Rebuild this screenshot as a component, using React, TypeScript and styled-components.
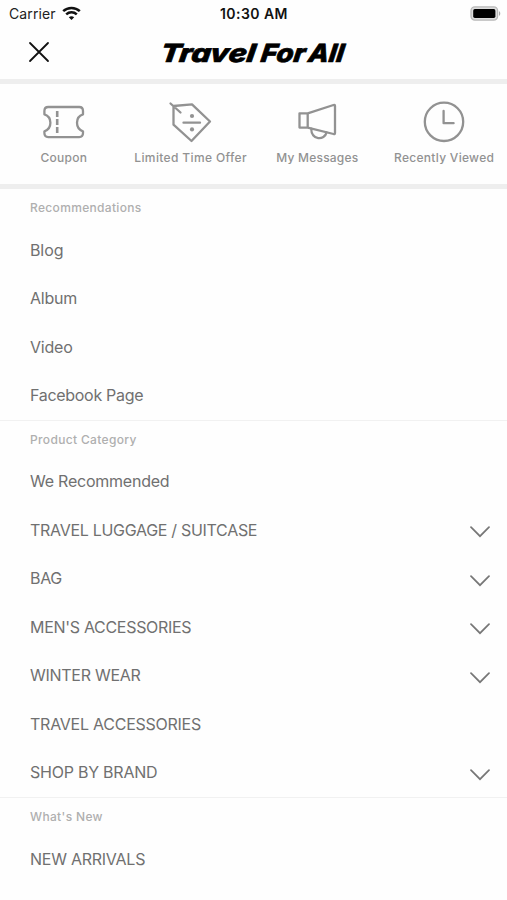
import React from "react";
import styled, { createGlobalStyle } from "styled-components";

const GlobalStyle = createGlobalStyle`
  * { box-sizing: border-box; }
  body {
    margin: 0;
    background: #fefefe;
    font-family: Inter, "Liberation Sans", sans-serif;
    overflow: hidden;
  }
`;

const Screen = styled.div`
  width: 507px;
  height: 900px;
  display: flex;
  flex-direction: column;
  overflow: hidden;
  background: #fefefe;
`;

const StatusBar = styled.div`
  height: 28px;
  flex: none;
  display: grid;
  grid-template-columns: 1fr auto 1fr;
  align-items: center;
  padding: 0 6px 2px 9px;
  font-size: 14px;
  color: #222;
`;

const Carrier = styled.div`
  display: flex;
  align-items: center;
  gap: 6px;
  letter-spacing: 0.12px;
`;

const Clock = styled.div`
  margin-right: 2px;
  font-weight: 600;
  font-size: 14px;
  color: #111;
  letter-spacing: 0.45px;
`;

const BatterySlot = styled.div`
  display: flex;
  justify-content: flex-end;
`;

const Header = styled.header`
  height: 51px;
  flex: none;
  display: grid;
  grid-template-columns: 1fr 190px 1fr;
  align-items: center;
`;

const CloseButton = styled.button`
  display: flex;
  width: 22px;
  height: 22px;
  margin: -3px 0 0 28px;
  padding: 0;
  border: 0;
  background: none;
`;

const Band = styled.div`
  height: 5px;
  flex: none;
  background: #eee;
`;

const QuickLinks = styled.nav`
  height: 100px;
  flex: none;
  display: grid;
  grid-template-columns: repeat(4, 1fr);
  padding-top: 15px;
`;

const QuickLink = styled.a`
  display: flex;
  flex-direction: column;
  align-items: center;
  gap: 6px;
  color: #929292;
`;

const QuickLabel = styled.span<{ $spacing: number }>`
  padding-left: 1px;
  font-size: 12px;
  font-weight: 500;
  line-height: 18px;
  white-space: nowrap;
  letter-spacing: ${(p) => p.$spacing}px;
`;

const Section = styled.section`
  flex: none;
  & + & { border-top: 1px solid #f1f1f1; }
`;

const Heading = styled.h2<{ $spacing: number }>`
  margin: 0;
  height: 36.75px;
  padding-left: 30px;
  font-size: 12px;
  font-weight: 500;
  line-height: 37px;
  color: #afafaf;
  letter-spacing: ${(p) => p.$spacing}px;
`;

const Row = styled.div`
  height: 48.5px;
  display: flex;
  align-items: center;
  justify-content: space-between;
  padding: 0 17px 0.6px 30px;
  color: #707070;
`;

const RowLabel = styled.span<{ $spacing: number }>`
  font-size: 16px;
  line-height: 20px;
  letter-spacing: ${(p) => p.$spacing}px;
`;

const ChevronIcon = styled.svg`
  margin-top: 4.5px;
`;

const Wifi = () => (
  <svg width="19" height="15" viewBox="0 0 19 15" fill="none" stroke="#111" strokeWidth="2.5">
    <path d="M1.2 5.2C5.8.8 13.2.8 17.8 5.2" />
    <path d="M4.2 8.3c3-2.8 7.6-2.8 10.6 0" />
    <path d="M9.5 14 6.8 11.2c1.5-1.3 3.9-1.3 5.4 0z" fill="#111" stroke="none" />
  </svg>
);

const Battery = () => (
  <svg width="31" height="15" viewBox="0 0 31 15">
    <rect x="1" y="0.9" width="26.6" height="13.2" rx="3.8" fill="#ddd" stroke="#b8b8b8" strokeWidth="1.3" />
    <rect x="3.2" y="3.1" width="22.2" height="8.8" rx="1.6" fill="#000" />
    <path d="M29 5.2c1.7.6 1.7 4 0 4.6z" fill="#aaa" />
  </svg>
);

const Close = () => (
  <svg width="22" height="22" viewBox="0 0 22 22" stroke="#111" strokeWidth="1.8" strokeLinecap="round">
    <path d="M2 2l18 18M20 2L2 20" />
  </svg>
);

const Logo = () => (
  <svg width="190" height="42" viewBox="0 0 190 42" fill="#000" fontFamily="Inter" fontWeight="800" fontStyle="italic" fontSize="25" stroke="#000" strokeWidth="0.7">
    <g transform="translate(4 28.6) skewX(-8)">
      <text x="-3.5" y="0" textLength="95" lengthAdjust="spacingAndGlyphs">Travel</text>
      <text x="97" y="0" textLength="44.5" lengthAdjust="spacingAndGlyphs">For</text>
      <text x="144.5" y="0" textLength="35.5" lengthAdjust="spacingAndGlyphs">All</text>
    </g>
  </svg>
);

const QuickSvg = ({ children }: { children: React.ReactNode }) => (
  <svg width="44" height="44" viewBox="0 0 44 44" fill="none" stroke="currentColor" strokeWidth="2.3" strokeLinejoin="round" strokeLinecap="round">
    {children}
  </svg>
);

const CouponIcon = () => (
  <QuickSvg>
    <g transform="translate(.7 0)">
      <path d="M6.5 8h31q3.8 0 3.8 4v3.3c-8 2.5-8 14.5 0 17v1.8q0 4-3.8 4h-31q-3.8 0-3.8-4v-1.8c8-2.5 8-14.5 0-17V12q0-4 3.8-4z" />
      <path d="M15.5 12v6M15.5 20v6M15.5 28v6" strokeWidth="2.6" strokeLinecap="butt" />
    </g>
  </QuickSvg>
);

const OfferIcon = () => (
  <QuickSvg>
    <path d="M5.5 7 24 5.3 42 22.5 23.5 42 5.5 25.7zM2.5 4.5l10 9" />
    <path d="M15.5 23.7H32" />
    <circle cx="24" cy="17" r="2.1" fill="currentColor" stroke="none" />
    <circle cx="24" cy="30.4" r="2.1" fill="currentColor" stroke="none" />
  </QuickSvg>
);

const MessageIcon = () => (
  <QuickSvg>
    <path d="M4.5 14.3h8.2v14.3H4.5zM12.7 14.3 38.5 6q1.5-.5 1.5 1v27q0 1.5-1.5 1L12.7 28.6" />
    <path d="M16.2 29.6c0 12 13.5 12 15.3 3.8" />
  </QuickSvg>
);

const ClockIcon = () => (
  <QuickSvg>
    <circle cx="22" cy="22.8" r="19.2" />
    <path d="M21.6 12v12.2h10" />
  </QuickSvg>
);

const Chevron = () => (
  <ChevronIcon width="20" height="12" viewBox="0 0 20 12" fill="none" stroke="#777" strokeWidth="1.7" strokeLinecap="round">
    <path d="M1 1.2l9 9 9-9" />
  </ChevronIcon>
);

const quickLinks = [
  { label: "Coupon", icon: <CouponIcon />, spacing: 0.25 },
  { label: "Limited Time Offer", icon: <OfferIcon />, spacing: 0.36 },
  { label: "My Messages", icon: <MessageIcon />, spacing: 0.2 },
  { label: "Recently Viewed", icon: <ClockIcon />, spacing: 0.3 },
];

type Item = { label: string; spacing: number; expandable?: boolean };

const sections: { title: string; spacing: number; items: Item[] }[] = [
  {
    title: "Recommendations",
    spacing: 0.33,
    items: [
      { label: "Blog", spacing: -0.1 },
      { label: "Album", spacing: -0.2 },
      { label: "Video", spacing: -0.2 },
      { label: "Facebook Page", spacing: -0.3 },
    ],
  },
  {
    title: "Product Category",
    spacing: 0.34,
    items: [
      { label: "We Recommended", spacing: -0.23 },
      { label: "TRAVEL LUGGAGE / SUITCASE", spacing: -0.3, expandable: true },
      { label: "BAG", spacing: -0.3, expandable: true },
      { label: "MEN'S ACCESSORIES", spacing: -0.3, expandable: true },
      { label: "WINTER WEAR", spacing: -0.28, expandable: true },
      { label: "TRAVEL ACCESSORIES", spacing: -0.25 },
      { label: "SHOP BY BRAND", spacing: -0.23, expandable: true },
    ],
  },
  {
    title: "What's New",
    spacing: 0.35,
    items: [{ label: "NEW ARRIVALS", spacing: -0.25 }],
  },
];

export default function App() {
  return (
    <Screen>
      <GlobalStyle />
      <StatusBar>
        <Carrier>
          Carrier
          <Wifi />
        </Carrier>
        <Clock>10:30 AM</Clock>
        <BatterySlot>
          <Battery />
        </BatterySlot>
      </StatusBar>
      <Header>
        <CloseButton aria-label="Close">
          <Close />
        </CloseButton>
        <Logo />
      </Header>
      <Band />
      <QuickLinks>
        {quickLinks.map((q) => (
          <QuickLink key={q.label}>
            {q.icon}
            <QuickLabel $spacing={q.spacing}>{q.label}</QuickLabel>
          </QuickLink>
        ))}
      </QuickLinks>
      <Band />
      {sections.map((s) => (
        <Section key={s.title}>
          <Heading $spacing={s.spacing}>{s.title}</Heading>
          {s.items.map((item) => (
            <Row key={item.label}>
              <RowLabel $spacing={item.spacing}>{item.label}</RowLabel>
              {item.expandable && <Chevron />}
            </Row>
          ))}
        </Section>
      ))}
    </Screen>
  );
}
